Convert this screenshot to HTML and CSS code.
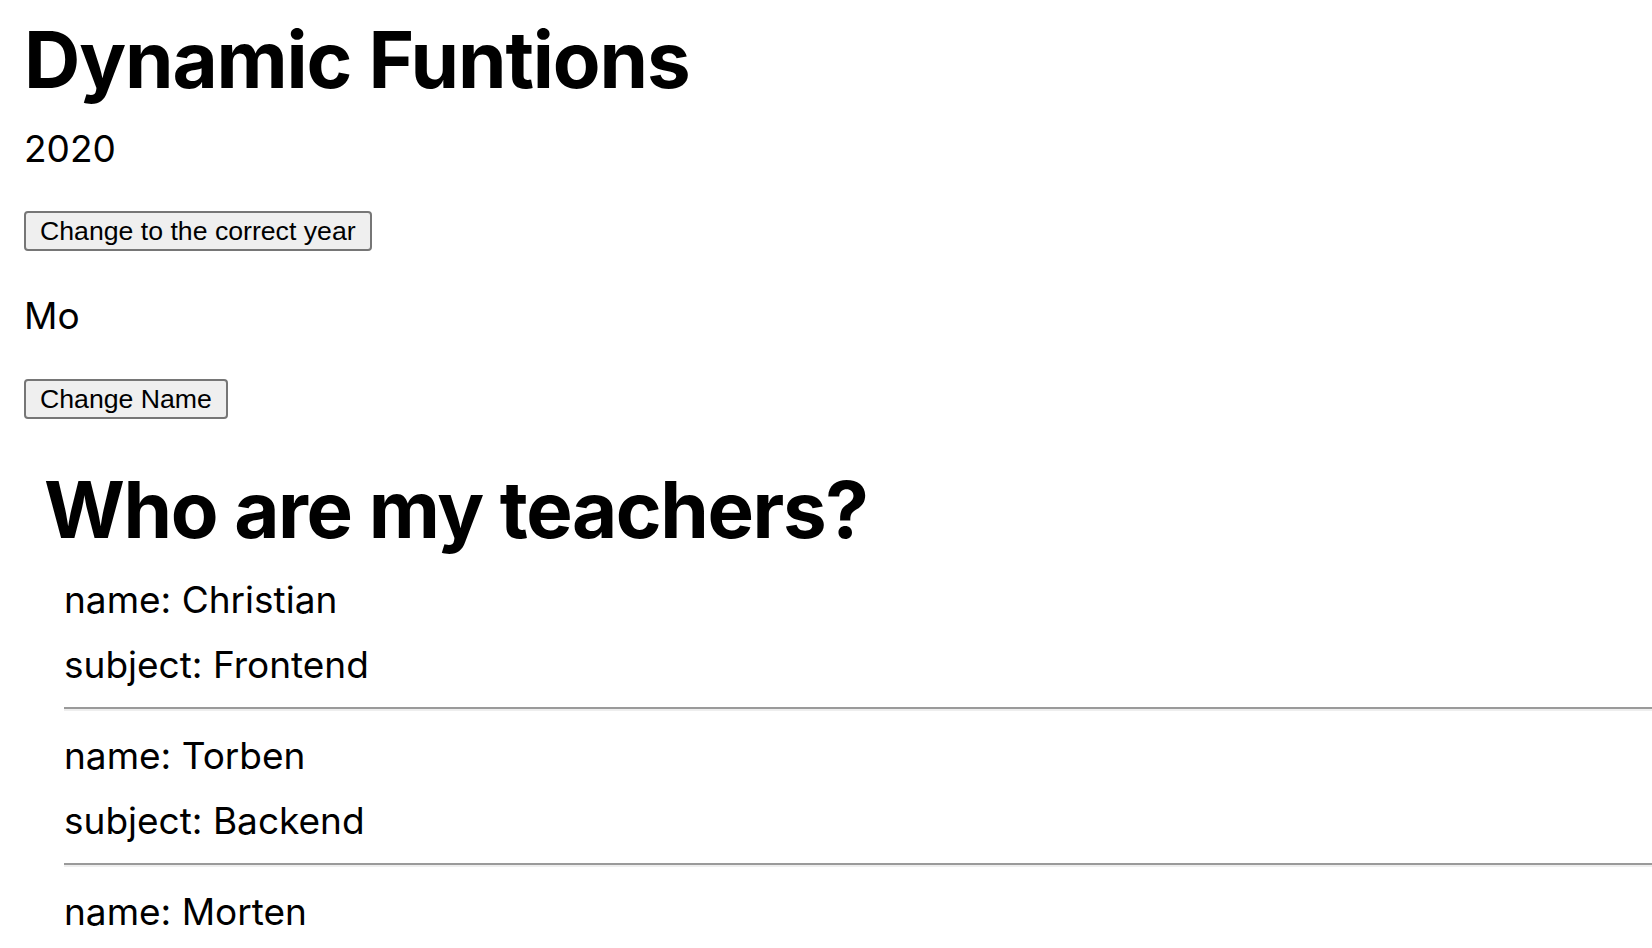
FILE: index.html
```html
<!DOCTYPE html>
<html lang="en">
<head>
<meta charset="utf-8">
<title>Dynamic Funtions</title>
<link rel="stylesheet" href="styles.css">
</head>
<body>
<main class="page">
  <h1 class="title">Dynamic Funtions</h1>
  <p class="value year">2020</p>
  <div class="action action-year"><button class="btn" type="button">Change to the correct year</button></div>
  <p class="value name">Mo</p>
  <div class="action action-name"><button class="btn" type="button">Change Name</button></div>
  <section class="teachers">
    <h2 class="teachers-title">Who are my teachers?</h2>
    <div class="teacher-list">
      <div class="teacher">
        <p class="teacher-line">name: Christian</p>
        <p class="teacher-line">subject: Frontend</p>
        <hr class="divider">
      </div>
      <div class="teacher">
        <p class="teacher-line">name: Torben</p>
        <p class="teacher-line">subject: Backend</p>
        <hr class="divider">
      </div>
      <div class="teacher">
        <p class="teacher-line">name: Morten</p>
      </div>
    </div>
  </section>
</main>
</body>
</html>
```

FILE: styles.css
```css
html, body {
  margin: 0;
  padding: 0;
  background: #ffffff;
}

body {
  color: #000000;
  font-family: Inter, "Noto Sans", sans-serif;
  overflow: hidden;
}

.page {
  display: flex;
  flex-direction: column;
  align-items: flex-start;
  padding: 13px 0 0 24px;
}

.title {
  margin: 0;
  font-size: 78px;
  line-height: 94px;
  font-weight: 700;
  letter-spacing: -1.15px;
}

.value {
  margin: 0;
  font-size: 37px;
  line-height: 45px;
  font-weight: 400;
}

.year {
  margin-top: 19px;
}

.action-year {
  margin-top: 40px;
}

.name {
  margin-top: 42px;
}

.action-name {
  margin-top: 41px;
}

.btn {
  display: block;
  margin: 0;
  padding: 2px 14px;
  font-family: "Liberation Sans", Arial, sans-serif;
  font-size: 26.67px;
  line-height: 32px;
  color: #000000;
  background: #efefef;
  border: 2px solid #767676;
  border-radius: 4px;
}

.teachers {
  align-self: stretch;
  margin-top: 44px;
  padding-left: 20px;
}

.teachers-title {
  margin: 0;
  font-size: 78px;
  line-height: 94px;
  font-weight: 700;
  letter-spacing: -1.4px;
}

.teacher-list {
  padding-left: 20px;
}

.teacher-line {
  margin: 20px 0;
  font-size: 37px;
  line-height: 45px;
}

.divider {
  margin: 19px 0 22px;
  height: 0;
  border: 0;
  border-top: 2px solid #9a9a9a;
  border-bottom: 2px solid #eeeeee;
}
```
